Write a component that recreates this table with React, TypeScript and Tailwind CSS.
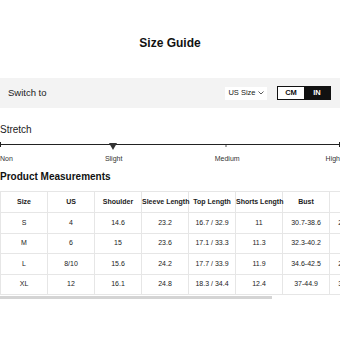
const headers = ['Size', 'US', 'Shoulder', 'Sleeve Length', 'Top Length', 'Shorts Length', 'Bust', 'Waist'];

const rows = [
  ['S', '4', '14.6', '23.2', '16.7 / 32.9', '11', '30.7-38.6', '24.4-32.3'],
  ['M', '6', '15', '23.6', '17.1 / 33.3', '11.3', '32.3-40.2', '26-33.9'],
  ['L', '8/10', '15.6', '24.2', '17.7 / 33.9', '11.9', '34.6-42.5', '28.3-36.2'],
  ['XL', '12', '16.1', '24.8', '18.3 / 34.4', '12.4', '37-44.9', '30.7-38.6'],
];

const rowHeights = ['h-[21px]', 'h-[20px]', 'h-[21px]', 'h-[20px]'];

const StretchScale = () => (
  <svg width="340" height="10" viewBox="0 0 340 10" className="block">
    <line x1="0" y1="3.5" x2="340" y2="3.5" stroke="#222" strokeWidth="1" />
    <line x1="0.5" y1="1" x2="0.5" y2="6" stroke="#222" strokeWidth="1" />
    <line x1="339.5" y1="1" x2="339.5" y2="6" stroke="#222" strokeWidth="1" />
    <rect x="225.5" y="4" width="1" height="2" fill="#555" />
    <polygon points="109,2 117,2 113,9" fill="#333" />
  </svg>
);

export default function App() {
  return (
    <div className="w-[340px] h-[340px] overflow-hidden bg-white text-[#111] font-['Liberation_Sans',Arial,sans-serif]">
      <div className="h-[78px] pt-[35px] text-center text-[12px] leading-[16px] font-bold">Size Guide</div>

      <div className="h-[30px] bg-[#f3f3f3] flex items-center pl-[8px] pr-[9px]">
        <span className="text-[9.5px] text-[#222]">Switch to</span>
        <div className="ml-auto flex items-center">
          <div className="w-[42px] h-[13px] bg-white flex items-center justify-center text-[7.5px] text-[#222]">
            US Size
            <svg width="6" height="4" viewBox="0 0 6 4" className="ml-[2px]">
              <path d="M0.5 0.5 L3 3 L5.5 0.5" fill="none" stroke="#333" strokeWidth="0.8" />
            </svg>
          </div>
          <div className="ml-[10px] flex h-[14px] border border-[#111]">
            <div className="w-[26px] bg-white flex items-center justify-center text-[7.5px] font-bold">CM</div>
            <div className="w-[26px] bg-[#111] text-white flex items-center justify-center text-[7.5px] font-bold">IN</div>
          </div>
        </div>
      </div>

      <div className="mt-[16px] text-[10px] leading-[12px] text-[#222]">Stretch</div>
      <div className="mt-[5px]">
        <StretchScale />
      </div>
      <div className="flex text-[7px] leading-[9px] text-[#333] mt-[3px]">
        <span className="w-[105px]">Non</span>
        <span className="w-[110px]">Slight</span>
        <span className="w-[111px]">Medium</span>
        <span>High</span>
      </div>

      <div className="mt-[7px] text-[10px] leading-[13px] font-bold text-[#111]">Product Measurements</div>

      <div className="mt-[8px] w-[340px] overflow-hidden">
        <table className="border-collapse table-fixed w-[376px]">
          <thead>
            <tr className="h-[21px]">
              {headers.map((h) => (
                <th key={h} className="w-[47px] border border-[#e6e6e6] text-[7px] font-bold text-[#222] text-center whitespace-nowrap p-0">
                  {h}
                </th>
              ))}
            </tr>
          </thead>
          <tbody>
            {rows.map((r, ri) => (
              <tr key={r[0]} className={rowHeights[ri]}>
                {r.map((c, i) => (
                  <td key={i} className="border border-[#e6e6e6] text-[7px] text-[#222] text-center whitespace-nowrap p-0">
                    {c}
                  </td>
                ))}
              </tr>
            ))}
          </tbody>
        </table>
        <div className="mt-[1px] h-[3px] w-[272px] bg-[#d4d4d4]" />
      </div>
    </div>
  );
}
